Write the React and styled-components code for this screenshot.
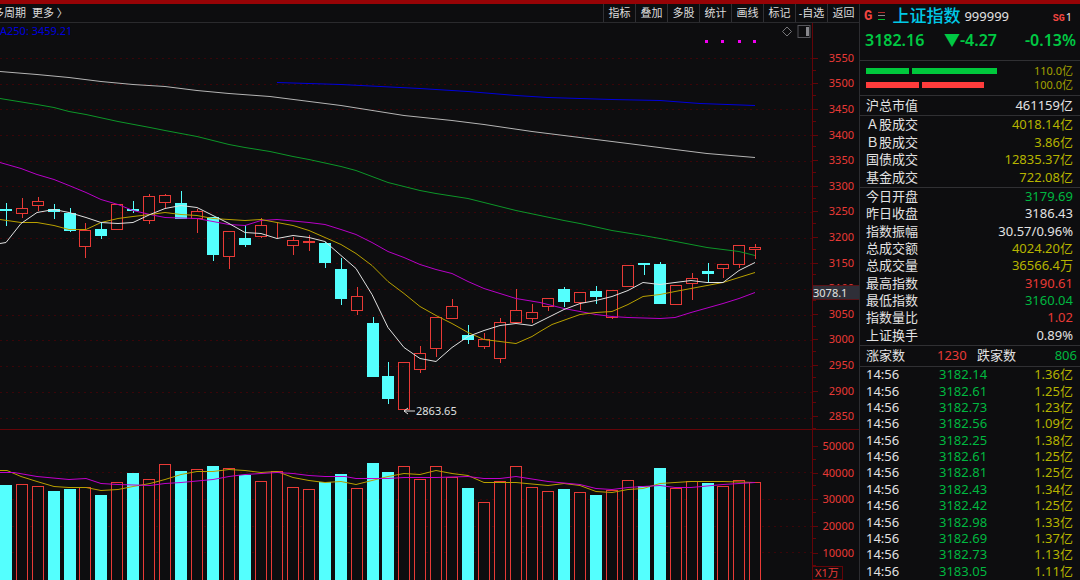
import React from 'react';
import styled, { createGlobalStyle } from 'styled-components';

const GlobalStyle = createGlobalStyle`
  * { box-sizing: border-box; }
  body {
    margin: 0;
    background: #0d0d0f;
    color: #e2e2e2;
    font-family: 'Noto Sans', 'Noto Sans CJK SC', sans-serif;
    font-size: 13px;
    overflow-x: hidden;
  }
`;

const RED = '#e83a36';
const GREEN = '#00b840';
const YELLOW = '#b6b400';
const CYAN = '#54fffe';
const AXIS = '#640408';

const Page = styled.div`
  min-height: 100vh;
  display: flex;
  flex-direction: column;
  border-top: 4px solid #960306;
`;

const Content = styled.div`
  flex: 1;
  display: flex;
`;

/**
 * Left side: toolbar and both chart panes
 */
const ChartArea = styled.main`
  flex: 1;
  min-width: 0;
  display: flex;
  flex-direction: column;
`;

const Toolbar = styled.header`
  height: 19px;
  display: flex;
  justify-content: space-between;
  border-bottom: 1px solid #2a2a2d;
  overflow: hidden;
`;

const ToolGroup = styled.div`
  display: flex;
  gap: ${({ $gap }) => $gap || 0};
  margin-left: ${({ $shift }) => $shift || 0};
`;

const ToolButton = styled.button`
  width: ${({ $auto }) => ($auto ? 'auto' : '32px')};
  padding: 0 0 1px;
  border: 0;
  border-left: ${({ $auto }) => ($auto ? '0' : '1px solid #303034')};
  background: transparent;
  color: #dcdcdc;
  font: inherit;
  font-size: 11px;
  line-height: 16px;
  white-space: nowrap;
  cursor: pointer;
`;

const Pane = styled.section`
  height: ${({ $height }) => $height};
  display: flex;
  position: relative;
  border-top: ${({ $divided }) => ($divided ? `1px solid ${AXIS}` : '0')};
`;

const Plot = styled.svg`
  flex: 1;
  min-width: 0;
  height: 100%;
`;

const Legend = styled.span`
  position: absolute;
  top: 0;
  left: -10px;
  color: #0000dc;
  font-size: 11px;
  line-height: 16px;
`;

const PaneTools = styled.div`
  position: absolute;
  top: 2px;
  right: 48px;
  display: flex;
  gap: 5px;
`;

const IconButton = styled.button`
  display: flex;
  padding: 0;
  border: 0;
  background: transparent;
  cursor: pointer;
`;

const Axis = styled.div`
  width: 47px;
  display: flex;
  flex-direction: column;
  padding-top: ${({ $top }) => $top};
  border-left: 1px solid ${AXIS};
  position: relative;
`;

const AxisLabel = styled.div`
  flex: 1;
  display: flex;
  align-items: center;
  justify-content: flex-end;
  padding-right: 5px;
  position: relative;
  color: ${RED};
  font-size: 11px;
  line-height: 16px;

  &:before, &:after {
    content: '';
    position: absolute;
    left: 0;
    height: 1px;
    background: ${AXIS};
  }
  &:before { top: 50%; width: 5px; }
  &:after { bottom: 0; width: 3px; }
`;

const PriceFlag = styled.div`
  position: absolute;
  top: 262px;
  left: 0;
  width: 46px;
  border: 1px solid #5a1216;
  border-width: 1px 0;
  background: #2f2f38;
  font-size: 11px;
  line-height: 13px;
`;

const UnitLabel = styled.div`
  align-self: flex-start;
  padding: 0 3px 0 2px;
  border: 1px solid ${AXIS};
  border-left: 0;
  color: ${RED};
  font-size: 11px;
  line-height: 12px;
`;

/**
 * Right side: quote panel
 */
const Sidebar = styled.aside`
  width: 221px;
  flex-shrink: 0;
  display: flex;
  flex-direction: column;
  border-left: 1px solid #2c2c30;
`;

const Block = styled.div`
  display: flex;
  flex-direction: column;
  justify-content: center;
  height: ${({ $height }) => $height};
  padding: 0 7px 0 6px;
  border-bottom: 1px solid #303033;
`;

const TitleRow = styled.div`
  display: flex;
  align-items: center;
  gap: 4px;
  height: 24px;
  padding: 0 8px 0 4px;
`;

const Mark = styled.span`
  color: #f24540;
  font-family: 'Liberation Mono', monospace;
  font-size: ${({ $size }) => $size};
  font-weight: 700;
`;

const MenuIcon = styled.svg`
  width: 8px;
  height: 10px;
  margin: 0 2px;
`;

const IndexName = styled.h1`
  margin: 0;
  color: #00c8e6;
  font-size: 17px;
  font-weight: 500;
  line-height: 24px;
`;

const Badge = styled.span`
  display: flex;
  align-items: baseline;
  gap: 1px;
  margin-left: auto;
  font-size: 11px;
`;

const QuoteRow = styled.div`
  display: grid;
  grid-template-columns: 79px 1fr auto;
  padding: 0 4px 0 5px;
  height: 33px;
  border-bottom: 1px solid #303033;
  color: #00c843;
  font-size: 16px;
  font-weight: 600;
  line-height: 25px;
`;

const Flow = styled.div`
  display: flex;
  align-items: center;
  justify-content: space-between;
  height: 14px;
  color: #a4a200;
  font-size: 11px;
  line-height: 14px;
`;

const FlowBars = styled.div`
  display: flex;
  gap: 3px;
`;

const FlowBar = styled.span`
  height: 6px;
  background: ${({ $color }) => $color};
`;

const DataTable = styled.table`
  width: 100%;
  height: ${({ $height }) => $height};
  border-collapse: collapse;
  line-height: 14px;

  th, td { padding: 0 0 2px; font-weight: 400; text-align: left; }
  td:last-child { text-align: right; }
`;

const TimeCell = styled.td`
  width: 73px;
`;

const Value = styled.td`
  color: ${({ $color }) => $color || 'inherit'};
`;

const Breadth = styled.div`
  display: grid;
  grid-template-columns: 71px 40px 1fr auto;
  margin-right: -4px;
  padding-bottom: 2px;
  line-height: 16px;
`;

const Tone = styled.span`
  color: ${({ $color }) => $color};
`;

const Ticks = styled.div`
  flex: 1;
  padding: 0 7px 0 6px;
`;

const tools = ['指标', '叠加', '多股', '统计', '画线', '标记', '-自选', '返回'];

const prices = [3550, 3500, 3450, 3400, 3350, 3300, 3250, 3200, 3150, 3100, 3050, 3000, 2950, 2900, 2850];
const volumes = [50000, 40000, 30000, 20000, 10000];

// direction, high, body top, body bottom, low, volume top
const candles = [
  ['d', 203, 209, 211, 226, 485], ['u', 198, 208, 213, 218, 484], ['u', 197, 201, 205, 211, 486],
  ['d', 204, 209, 212, 219, 491], ['d', 208, 213, 231, 232, 489], ['u', 223, 230, 246, 258, 487],
  ['d', 222, 229, 236, 239, 495], ['u', 204, 204, 229, 229, 482], ['d', 201, 209, 211, 213, 473],
  ['u', 194, 196, 220, 224, 479], ['u', 194, 195, 202, 208, 464], ['d', 191, 203, 219, 219, 471],
  ['u', 209, 211, 218, 233, 469], ['d', 217, 217, 255, 261, 466], ['u', 231, 231, 256, 269, 468],
  ['d', 225, 238, 245, 247, 475], ['u', 218, 225, 236, 238, 481], ['u', 222, 232, 232, 238, 471],
  ['u', 237, 240, 245, 255, 487], ['u', 235, 241, 242, 251, 489], ['d', 242, 243, 263, 268, 482],
  ['d', 258, 269, 299, 305, 474], ['u', 287, 296, 310, 315, 488], ['d', 317, 323, 377, 377, 463],
  ['d', 362, 376, 399, 404, 472], ['u', 362, 362, 409, 409, 466], ['u', 346, 353, 369, 373, 479],
  ['u', 317, 317, 348, 357, 466], ['u', 299, 306, 318, 318, 477], ['d', 325, 335, 340, 344, 488],
  ['u', 333, 339, 346, 349, 502], ['u', 318, 322, 358, 363, 481], ['u', 289, 310, 322, 322, 466],
  ['u', 304, 312, 318, 323, 487], ['u', 298, 298, 306, 311, 491], ['d', 287, 289, 302, 307, 489],
  ['u', 292, 292, 302, 310, 492], ['d', 286, 291, 297, 304, 495], ['u', 290, 290, 317, 319, 490],
  ['u', 265, 265, 286, 286, 480], ['d', 263, 263, 265, 275, 486], ['d', 262, 264, 304, 304, 468],
  ['u', 285, 285, 304, 304, 488], ['u', 273, 278, 283, 300, 481], ['d', 263, 271, 274, 283, 483],
  ['u', 264, 264, 268, 278, 486], ['u', 245, 245, 264, 268, 480], ['u', 244, 247, 249, 259, 482],
];

const averages = [
  { color: '#0000dc', points: '277,82 341,84 420,88 468,91 516,95 548,97 612,99 660,100 700,103 755,105' },
  { color: '#b4b4b4', points: '0,71 37,74 69,77 101,81 133,84 165,86 197,90 229,93 270,96 341,105 404,115 452,120 484,124 532,131 580,137 628,143 675,149 707,153 755,157' },
  { color: '#0c9628', points: '0,98 37,104 54,107 69,111 86,114 118,121 150,127 165,130 197,136 213,140 229,144 245,147 270,151 293,156 309,159 341,166 356,170 388,182 420,190 436,193 468,198 500,206 516,210 540,215 564,220 580,223 612,230 643,235 660,238 707,247 739,251 755,255' },
  { color: '#b800c8', points: '0,162 21,168 37,174 54,179 69,185 86,192 101,199 118,204 133,210 150,214 165,217 197,218 213,221 229,224 245,225 261,220 277,219 309,222 325,224 341,229 356,234 372,242 388,251 404,257 420,264 436,269 452,273 468,281 484,288 500,293 516,298 540,302 564,308 596,314 612,316 628,317 660,318 675,317 691,312 723,303 739,298 755,292' },
  { color: '#b8a000', points: '0,219 21,222 37,222 54,225 69,229 86,229 101,222 118,218 133,216 150,214 165,212 181,214 197,215 213,218 229,219 245,220 261,219 277,222 293,225 309,230 325,237 341,244 356,253 372,265 388,281 404,293 420,306 436,315 452,323 468,332 484,339 500,341 516,343 532,336 540,331 552,324 580,314 596,312 612,311 628,304 643,296 660,294 675,291 691,288 707,285 723,282 739,277 755,272' },
  { color: '#e0e0e0', points: '0,243 6,242 21,223 37,212 54,209 69,212 86,217 101,222 118,223 133,222 150,214 165,208 181,205 197,207 213,215 229,223 245,232 261,233 277,238 293,235 309,237 325,241 341,255 356,268 372,294 388,327 404,347 420,358 436,361 452,347 468,336 484,330 500,325 516,323 532,325 540,321 548,317 564,309 580,303 596,300 612,296 628,290 643,282 660,284 675,282 691,280 707,282 723,282 739,270 755,262' },
];

const volumeAverages = [
  { color: '#b8a000', points: '0,470 7,470 21,476 37,481 54,486 69,487 86,487 101,490 118,489 133,486 150,483 165,479 181,474 197,471 213,471 229,469 245,470 261,472 277,471 293,477 309,480 325,482 341,481 356,484 372,480 388,476 404,473 420,474 436,470 452,473 468,475 484,482 516,482 548,485 564,483 580,485 596,491 612,492 628,489 643,488 660,483 675,482 691,481 723,481 755,482' },
  { color: '#c000cc', points: '0,472 14,472 37,476 69,479 86,478 101,483 118,484 150,485 165,483 181,482 213,479 229,476 245,474 277,472 293,473 309,475 325,476 345,476 356,478 388,478 404,477 436,477 468,476 484,478 500,478 516,476 548,481 580,484 596,488 612,489 628,487 643,486 660,485 675,487 691,487 723,484 755,482' },
];

const turnover = [
  ['Ａ股成交', '4018.14亿'],
  ['Ｂ股成交', '3.86亿'],
  ['国债成交', '12835.37亿'],
  ['基金成交', '722.08亿'],
];

const stats = [
  ['今日开盘', '3179.69', GREEN],
  ['昨日收盘', '3186.43'],
  ['指数振幅', '30.57/0.96%'],
  ['总成交额', '4024.20亿', YELLOW],
  ['总成交量', '36566.4万', YELLOW],
  ['最高指数', '3190.61', RED],
  ['最低指数', '3160.04', GREEN],
  ['指数量比', '1.02', RED],
  ['上证换手', '0.89%'],
];

const ticks = [
  ['3182.14', '1.36'], ['3182.61', '1.25'], ['3182.73', '1.23'], ['3182.56', '1.09'],
  ['3182.25', '1.38'], ['3182.61', '1.25'], ['3182.81', '1.25'], ['3182.43', '1.34'],
  ['3182.42', '1.25'], ['3182.98', '1.33'], ['3182.69', '1.37'], ['3182.73', '1.13'],
  ['3183.05', '1.11'],
];

const flows = [
  { color: '#00c83c', bars: [43, 85], total: '110.0亿' },
  { color: '#ff3c3c', bars: [53, 62], total: '100.0亿' },
];

const centerOf = (i) => Math.round(5.7 + i * 15.95);

function Candle({ x, data }) {
  const [dir, high, top, bottom, low] = data;
  if (dir === 'd') {
    return (
      <g fill={CYAN}>
        <rect x={x} y={high} width="1" height={low - high} />
        <rect x={x - 6} y={top} width="12" height={bottom - top} />
      </g>
    );
  }
  return (
    <g stroke={RED} fill="none">
      <path d={`M${x + 0.5} ${high}V${top}M${x + 0.5} ${bottom}V${low}`} />
      <rect x={x - 5.5} y={top + 0.5} width="11" height={bottom - top} />
    </g>
  );
}

function VolumeBar({ x, data }) {
  const top = data[5];
  return data[0] === 'd'
    ? <rect x={x - 6} y={top} width="12" height={590 - top} fill={CYAN} />
    : <rect x={x - 5.5} y={top + 0.5} width="11" height={590 - top} fill="#0d0d0f" stroke={RED} />;
}

function Lines({ items }) {
  return items.map(({ color, points }) => (
    <polyline key={color} points={points} fill="none" stroke={color} transform="translate(0 0.5)" />
  ));
}

function GridLines({ count, start, step }) {
  return Array.from({ length: count }, (_, i) => {
    const y = Math.round(start + i * step) + 0.5;
    return <path key={i} d={`M0 ${y}H812`} stroke="#3a0509" strokeDasharray="2 4" />;
  });
}

export default function App() {
  return (
    <Page>
      <GlobalStyle />
      <Content>
        <ChartArea>
          <Toolbar>
            <ToolGroup $gap="6px" $shift="-7px">
              <ToolButton $auto>多周期</ToolButton>
              <ToolButton $auto>更多 〉</ToolButton>
            </ToolGroup>
            <ToolGroup>
              {tools.map((t) => <ToolButton key={t}>{t}</ToolButton>)}
            </ToolGroup>
          </Toolbar>

          {/* Price pane */}
          <Pane $height="406px">
            <Legend>MA250: 3459.21</Legend>
            <PaneTools>
              <IconButton aria-label="marker">
                <svg width="10" height="14" viewBox="0 0 10 14" fill="none" stroke="#77777a">
                  <path d="M5 2 9.5 6.500 5 11 .5 6.500z" />
                </svg>
              </IconButton>
              <IconButton aria-label="side panel">
                <svg width="14" height="14" viewBox="0 0 14 14" fill="none" stroke="#55555a">
                  <rect x="1" y="0.5" width="12" height="12" />
                  <path d="M10.500 2v9" stroke="#88888c" strokeWidth="3" />
                </svg>
              </IconButton>
            </PaneTools>
            <Plot viewBox="0 23 812 406" preserveAspectRatio="xMaxYMin meet">
              <GridLines count={15} start={58} step={25.68} />
              {candles.map((c, i) => <Candle key={i} x={centerOf(i)} data={c} />)}
              <Lines items={averages} />
              <g fill="#f000f0">
                {[705, 721, 738, 753].map((x) => <rect key={x} x={x} y="40" width="3" height="3" />)}
              </g>
              <path d="M415 411H404M408 408L404 411L408 414" stroke="#e0e0e0" fill="none" />
              <text x="416" y="415" fill="#e0e0e0" fontSize="11">2863.65</text>
            </Plot>
            <Axis $top="22px">
              {prices.map((p) => <AxisLabel key={p}>{p}</AxisLabel>)}
              <PriceFlag>3078.1</PriceFlag>
            </Axis>
          </Pane>

          {/* Volume pane */}
          <Pane $height="151px" $divided>
            <Plot viewBox="0 430 812 150" preserveAspectRatio="xMaxYMin meet">
              <GridLines count={4} start={472} step={26.75} />
              {candles.map((c, i) => <VolumeBar key={i} x={centerOf(i)} data={c} />)}
              <Lines items={volumeAverages} />
            </Plot>
            <Axis $top="3px">
              {volumes.map((v) => <AxisLabel key={v}>{v}</AxisLabel>)}
              <UnitLabel>X1万</UnitLabel>
            </Axis>
          </Pane>
        </ChartArea>

        <Sidebar>
          <TitleRow>
            <Mark $size="14px">G</Mark>
            <MenuIcon viewBox="0 0 8 10">
              <path d="M0 1.500h7" stroke="#b02a2a" />
              <path d="M0 4.500h7" stroke="#888" />
              <path d="M0 8.500h7" stroke="#00c030" />
            </MenuIcon>
            <IndexName>上证指数</IndexName>
            <span>999999</span>
            <Badge><Mark $size="10px">SG</Mark>1</Badge>
          </TitleRow>
          <QuoteRow>
            <span>3182.16</span>
            <span>▼-4.27</span>
            <span>-0.13%</span>
          </QuoteRow>
          <Block $height="35px">
            {flows.map(({ color, bars, total }) => (
              <Flow key={total}>
                <FlowBars>
                  {bars.map((w) => <FlowBar key={w} $color={color} style={{ width: w }} />)}
                </FlowBars>
                {total}
              </Flow>
            ))}
          </Block>
          <Block $height="20px">
            <DataTable $height="18px">
              <tbody>
                <tr><th scope="row">沪总市值</th><td>461159亿</td></tr>
              </tbody>
            </DataTable>
          </Block>
          <Block $height="72px">
            <DataTable $height="70px">
              <tbody>
                {turnover.map(([name, value]) => (
                  <tr key={name}><th scope="row">{name}</th><Value $color={YELLOW}>{value}</Value></tr>
                ))}
              </tbody>
            </DataTable>
          </Block>
          <Block $height="158px">
            <DataTable $height="156px">
              <tbody>
                {stats.map(([name, value, color]) => (
                  <tr key={name}><th scope="row">{name}</th><Value $color={color}>{value}</Value></tr>
                ))}
              </tbody>
            </DataTable>
          </Block>
          <Block $height="21px">
            <Breadth>
              <span>涨家数</span>
              <Tone $color={RED}>1230</Tone>
              <span>跌家数</span>
              <Tone $color={GREEN}>806</Tone>
            </Breadth>
          </Block>
          <Ticks>
            <DataTable $height="213px">
              <tbody>
                {ticks.map(([price, volume], i) => (
                  <tr key={i}>
                    <TimeCell>14:56</TimeCell>
                    <Value $color={GREEN}>{price}</Value>
                    <Value $color={YELLOW}>{volume}亿</Value>
                  </tr>
                ))}
              </tbody>
            </DataTable>
          </Ticks>
        </Sidebar>
      </Content>
    </Page>
  );
}
